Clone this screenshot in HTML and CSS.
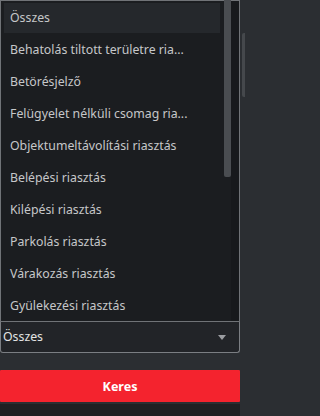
FILE: index.html
```html
<!DOCTYPE html>
<html lang="hu">
<head>
<meta charset="utf-8">
<title>Riasztás szűrő</title>
<link rel="stylesheet" href="styles.css">
</head>
<body>
<div class="page">
  <div class="main">
    <div class="dropdown">
      <ul class="options">
        <li class="option active">Összes</li>
        <li class="option">Behatolás tiltott területre ria...</li>
        <li class="option">Betörésjelző</li>
        <li class="option">Felügyelet nélküli csomag ria...</li>
        <li class="option">Objektumeltávolítási riasztás</li>
        <li class="option">Belépési riasztás</li>
        <li class="option">Kilépési riasztás</li>
        <li class="option">Parkolás riasztás</li>
        <li class="option">Várakozás riasztás</li>
        <li class="option">Gyülekezési riasztás</li>
      </ul>
      <div class="scrollbar">
        <div class="thumb-col"><div class="thumb"></div></div>
        <div class="track"></div>
      </div>
    </div>
    <div class="select">
      <span class="select-value">Összes</span>
      <span class="caret"></span>
    </div>
    <button class="search-btn" type="button">Keres</button>
    <div class="bottom-bar"></div>
  </div>
  <div class="gutter"><div class="gutter-thumb"></div></div>
</div>
</body>
</html>
```

FILE: styles.css
```css
* { box-sizing: border-box; }
html, body {
  margin: 0;
  padding: 0;
  height: 416px;
  overflow: hidden;
  background: #2b2e32;
  font-family: "Noto Sans", "Open Sans", sans-serif;
}
.page {
  display: flex;
  width: 245px;
  height: 416px;
}
.main {
  width: 240px;
  display: flex;
  flex-direction: column;
}
.gutter {
  width: 5px;
  padding-top: 33px;
  padding-left: 2px;
}
.gutter-thumb {
  width: 3px;
  height: 64px;
  background: #45484c;
  border-radius: 2px 0 0 2px;
}
.dropdown {
  height: 322px;
  display: flex;
  background: #1b1d20;
  border: 1px solid #707377;
}
.options {
  list-style: none;
  margin: 0;
  padding: 2px 4px 0 3px;
  flex: 1;
  overflow: hidden;
}
.option {
  height: 30px;
  margin-bottom: 2px;
  padding-left: 6px;
  line-height: 30px;
  font-size: 12.3px;
  color: #c6c7c9;
  white-space: nowrap;
  overflow: hidden;
}
.option.active {
  background: #25282c;
}
.scrollbar {
  width: 15px;
  display: flex;
}
.thumb-col {
  width: 7px;
}
.thumb {
  width: 7px;
  height: 177px;
  margin-top: -1px;
  background: #4a4d51;
  border-radius: 0 0 2px 2px;
}
.track {
  width: 8px;
  background: #17191c;
}
.select {
  height: 31px;
  display: flex;
  align-items: center;
  justify-content: space-between;
  padding: 0 13px 0 2px;
  background: #222428;
  border: 1px solid #7b7e83;
  border-top: none;
  border-radius: 0 0 3px 3px;
}
.select-value {
  font-size: 12.3px;
  color: #e4e4e4;
  line-height: 30px;
}
.caret {
  width: 0;
  height: 0;
  border-left: 4px solid transparent;
  border-right: 4px solid transparent;
  border-top: 5px solid #9b9da1;
}
.search-btn {
  margin-top: 17px;
  height: 32px;
  width: 240px;
  border: none;
  border-radius: 1px;
  background: #f4232e;
  color: #ffffff;
  font-family: "Noto Sans", "Open Sans", sans-serif;
  font-weight: 700;
  font-size: 12.5px;
  padding: 0;
}
.bottom-bar {
  margin-top: 2px;
  flex: 1;
  background: #1e2023;
}
```
